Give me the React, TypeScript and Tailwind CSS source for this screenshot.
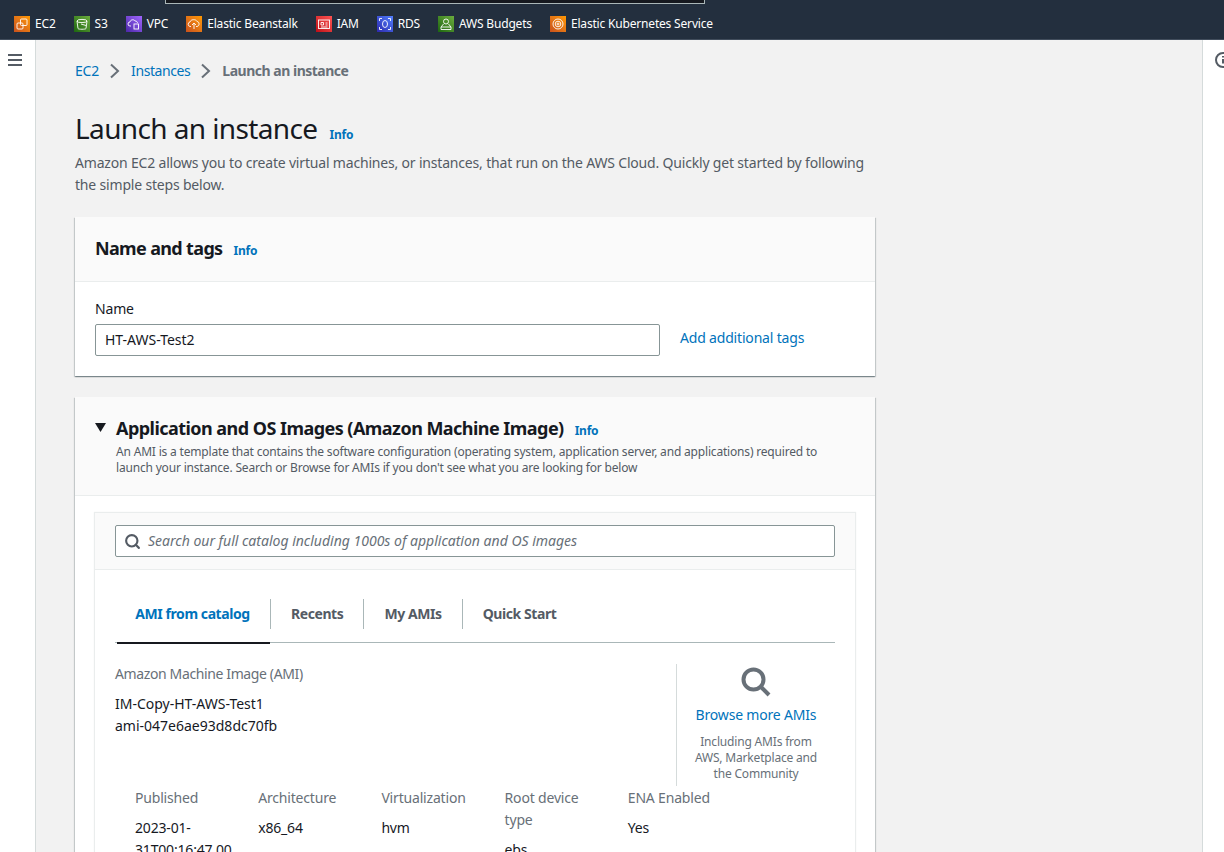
import { Search } from "lucide-react";
import type { ReactNode } from "react";

const services: { label: string; bg: string; icon: ReactNode }[] = [
  {
    label: "EC2",
    bg: "bg-gradient-to-tr from-[#c8511b] to-[#ff9900]",
    icon: (
      <>
        <rect x="3" y="7" width="6" height="6" rx="1" />
        <rect x="6.5" y="3" width="6.5" height="6.5" rx="1" />
      </>
    ),
  },
  {
    label: "S3",
    bg: "bg-gradient-to-tr from-[#1b660f] to-[#6cae3e]",
    icon: (
      <>
        <ellipse cx="8" cy="5" rx="5" ry="1.6" />
        <path d="M3 5l1 7.5c.3 1 7.7 1 8 0L13 5" />
        <path d="M7 8l5 1.5" />
      </>
    ),
  },
  {
    label: "VPC",
    bg: "bg-gradient-to-tr from-[#4d27a8] to-[#a166ff]",
    icon: (
      <>
        <path d="M5 10H4a2 2 0 0 1 0-4c.4-2.5 4-3 5-1 1.5-.2 2.5 1 2.5 2" />
        <rect x="8" y="8" width="4.5" height="5" />
      </>
    ),
  },
  {
    label: "Elastic Beanstalk",
    bg: "bg-gradient-to-tr from-[#c8511b] to-[#ff9900]",
    icon: (
      <>
        <path d="M5 10.5H4a2.3 2.3 0 0 1 0-4.5c.5-2.8 6-3.2 7-.5 2.5 0 3 4.5 0 5h-1" />
        <path d="M8 7v6M6 9l2-2 2 2" />
      </>
    ),
  },
  {
    label: "IAM",
    bg: "bg-gradient-to-tr from-[#bd0816] to-[#ff5252]",
    icon: (
      <>
        <rect x="2.5" y="4" width="11" height="8.5" />
        <path d="M5 6.5h2.5V9H5zM9.5 7h2M9.5 9h2M5 11h6.5" />
      </>
    ),
  },
  {
    label: "RDS",
    bg: "bg-gradient-to-tr from-[#2e27ad] to-[#527fff]",
    icon: (
      <>
        <ellipse cx="8" cy="8" rx="2.5" ry="3.5" />
        <path d="M2.5 5V2.5H5M11 2.5h2.5V5M13.5 11v2.5H11M5 13.5H2.5V11" />
      </>
    ),
  },
  {
    label: "AWS Budgets",
    bg: "bg-gradient-to-tr from-[#1b660f] to-[#6cae3e]",
    icon: (
      <>
        <circle cx="8" cy="5.5" r="2.5" />
        <path d="M5.5 8L3 11v2.5h10V11L10.5 8M3 11h10" />
      </>
    ),
  },
  {
    label: "Elastic Kubernetes Service",
    bg: "bg-gradient-to-tr from-[#c8511b] to-[#ff9900]",
    icon: (
      <>
        <circle cx="8" cy="8" r="5" />
        <circle cx="8" cy="8" r="2.8" />
        <circle cx="8" cy="8" r="1" />
      </>
    ),
  },
];

const details = [
  { label: "Published", value: "2023-01-31T00:16:47.000Z" },
  { label: "Architecture", value: "x86_64" },
  { label: "Virtualization", value: "hvm" },
  { label: "Root device type", value: "ebs" },
  { label: "ENA Enabled", value: "Yes" },
];

const tabs = ["Recents", "My AMIs", "Quick Start"];

const Info = () => <a className="text-xs font-bold tracking-[-0.02em] text-[#0073bb]">Info</a>;

const Chevron = () => (
  <svg width="12" height="16" viewBox="0 0 12 16" fill="none" stroke="#687078" strokeWidth="2">
    <path d="M2 1.5l7 6.5-7 6.5" />
  </svg>
);

export default function App() {
  return (
    <div className="h-[852px] overflow-hidden flex flex-col bg-[#f2f2f2] text-sm tracking-[-0.013em] text-[#16191f] font-['Noto_Sans',sans-serif]">
      {/* top nav */}
      <header className="relative h-10 shrink-0 bg-[#232f3e] border-b border-[#414d5c] flex items-center gap-[18px] pl-[14px] pt-2">
        <div className="absolute left-[165px] top-0 w-[540px] h-1 bg-[#16191f] border-x border-b border-[#aab7b8]" />
        {services.map((s) => (
          <div key={s.label} className="flex items-center gap-[5px] text-xs text-white whitespace-nowrap">
            <span className={`w-4 h-4 flex items-center justify-center ${s.bg}`}>
              <svg width="16" height="16" viewBox="0 0 16 16" fill="none" stroke="white" strokeWidth="0.9">
                {s.icon}
              </svg>
            </span>
            {s.label}
          </div>
        ))}
      </header>

      <div className="flex flex-1 min-h-0">
        {/* left rail */}
        <aside className="w-[36px] shrink-0 bg-white border-r border-[#d5dbdb] pt-[14px] pl-2">
          <svg width="14" height="12" viewBox="0 0 14 12" fill="none" stroke="#545b64" strokeWidth="2">
            <path d="M0 1h14M0 6h14M0 11h14" />
          </svg>
        </aside>

        {/* main */}
        <main className="w-[1166px] shrink-0 pl-[39px] overflow-hidden">
          <nav className="flex items-center h-[22px] mt-[20px] gap-[10px]">
            <a className="text-[#0073bb]">EC2</a>
            <Chevron />
            <a className="tracking-[-0.03em] text-[#0073bb]">Instances</a>
            <Chevron />
            <span className="font-bold tracking-[-0.035em] text-[#687078]">Launch an instance</span>
          </nav>

          <div className="w-[800px]">
            <div className="flex items-baseline gap-3 mt-[28px]">
              <h1 className="text-[28px] leading-9 font-normal tracking-[-0.022em]">Launch an instance</h1>
              <Info />
            </div>
            <p className="mt-[6px] leading-[22px] text-[#545b64]">
              Amazon EC2 allows you to create virtual machines, or instances, that run on the AWS Cloud. Quickly get started by following the simple steps below.
            </p>

            {/* name and tags */}
            <section className="mt-[21px] bg-white shadow-[0_1px_1px_0_rgba(0,28,36,0.3),1px_1px_1px_0_rgba(0,28,36,0.15),-1px_1px_1px_0_rgba(0,28,36,0.15)]">
              <div className="h-[65px] px-5 pb-[2px] flex items-center gap-[11px] bg-[#fafafa] border-b border-[#eaeded]">
                <h2 className="text-lg font-bold tracking-[-0.036em]">Name and tags</h2>
                <span className="pt-[3px]">
                  <Info />
                </span>
              </div>
              <div className="px-5 pt-4 pb-5">
                <label className="block leading-[22px]">Name</label>
                <div className="flex items-center gap-5 mt-1">
                  <div className="w-[565px] h-8 px-[9px] flex items-center bg-white border border-[#879596] rounded-[2px] tracking-normal">HT-AWS-Test2</div>
                  <a className="text-[#0073bb] pb-1">Add additional tags</a>
                </div>
              </div>
            </section>

            {/* AMI */}
            <section className="mt-[21px] bg-white shadow-[0_1px_1px_0_rgba(0,28,36,0.3),1px_1px_1px_0_rgba(0,28,36,0.15),-1px_1px_1px_0_rgba(0,28,36,0.15)]">
              <div className="h-[99px] px-5 pt-[17px] bg-[#fafafa] border-b border-[#eaeded] flex gap-[10px]">
                <svg width="11" height="9" viewBox="0 0 11 9" className="mt-[9px] shrink-0" fill="#16191f">
                  <path d="M0 0h11L5.5 9z" />
                </svg>
                <div>
                  <div className="flex items-baseline gap-[11px]">
                    <h2 className="text-lg font-bold tracking-[-0.03em]">Application and OS Images (Amazon Machine Image)</h2>
                    <Info />
                  </div>
                  <p className="text-xs leading-4 text-[#545b64] mt-[2px] w-[720px]">
                    An AMI is a template that contains the software configuration (operating system, application server, and applications) required to launch your instance. Search or Browse for AMIs if you don't see what you are looking for below
                  </p>
                </div>
              </div>

              <div className="px-5 pt-[17px]">
                <div className="bg-white shadow-[0_0_1px_1px_#eaeded]">
                  <div className="h-[57px] px-5 bg-[#fafafa] border-b border-[#eaeded] flex items-center">
                    <div className="w-full h-8 px-2 flex items-center gap-[7px] bg-white border border-[#879596] rounded-[2px]">
                      <Search size={17} strokeWidth={3} className="text-[#545b64]" />
                      <span className="italic tracking-normal text-[#687078]">Search our full catalog including 1000s of application and OS images</span>
                    </div>
                  </div>

                  <div className="px-5 pt-[29px]">
                    <div className="flex h-[44px] items-start border-b border-[#aab7b8] font-bold tracking-[-0.03em]">
                      <div className="relative w-[155px] h-[44px] shrink-0 flex pt-[4px] justify-center text-[#0073bb]">
                        <span className="leading-[22px]">AMI from catalog</span>
                        <div className="absolute left-[2px] right-0 bottom-[-1px] h-[2px] bg-[#16191f]" />
                      </div>
                      {tabs.map((t) => (
                        <div key={t} className="h-[30px] px-5 border-l border-[#aab7b8] flex items-center text-[#545b64] whitespace-nowrap">
                          {t}
                        </div>
                      ))}
                    </div>

                    <div className="flex justify-between mt-[21px]">
                      <div className="-mt-px">
                        <p className="leading-[22px] tracking-[-0.027em] text-[#687078]">Amazon Machine Image (AMI)</p>
                        <p className="mt-2 leading-[22px] tracking-normal">IM-Copy-HT-AWS-Test1</p>
                        <p className="leading-[22px] tracking-normal">ami-047e6ae93d8dc70fb</p>
                      </div>
                      <div className="w-[159px] h-[122px] border-l border-[#d5dbdb] flex flex-col items-center text-center">
                        <svg width="32" height="32" viewBox="0 0 32 32" fill="none" stroke="#687078" strokeWidth="4" className="mt-[2px]">
                          <circle cx="13.5" cy="13.5" r="10" />
                          <path d="M21 21l8 8" />
                        </svg>
                        <a className="text-[#0073bb] leading-[22px] mt-[6px]">Browse more AMIs</a>
                        <p className="text-xs leading-4 text-[#687078] mt-[8px] px-4">Including AMIs from AWS, Marketplace and the Community</p>
                      </div>
                    </div>

                    <div className="grid grid-cols-5 w-[616px] ml-5 mt-px">
                      {details.map((d) => (
                        <div key={d.label} className="w-[100px]">
                          <p className="leading-[22px] text-[#687078]">{d.label}</p>
                          <p className="mt-2 leading-[22px] break-words">{d.value}</p>
                        </div>
                      ))}
                    </div>
                    <div className="h-10" />
                  </div>
                </div>
              </div>
            </section>
          </div>
        </main>

        {/* right rail */}
        <aside className="flex-1 bg-white border-l border-[#d5dbdb] pl-[10px] pt-[10px] overflow-hidden">
          <svg width="20" height="20" viewBox="0 0 20 20" fill="none" stroke="#545b64" strokeWidth="2" className="shrink-0">
            <circle cx="10" cy="10" r="7" />
            <path d="M10 9v4.5M10 6v1.5" />
          </svg>
        </aside>
      </div>
    </div>
  );
}
